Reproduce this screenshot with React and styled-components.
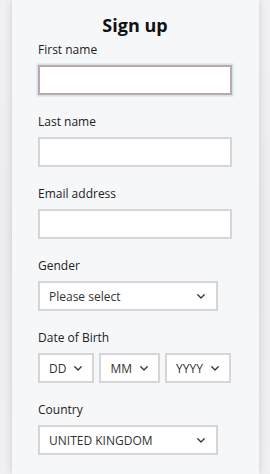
import React from "react";
import styled, { createGlobalStyle } from "styled-components";

const Global = createGlobalStyle`
  html, body { margin: 0; padding: 0; }
  body {
    background: #eeeef0;
    font-family: "Open Sans", "Liberation Sans", sans-serif;
    width: 270px;
    height: 474px;
    overflow: hidden;
  }
`;

const Page = styled.div`
  display: flex;
  height: 474px;
  padding-left: 12px;
  background: linear-gradient(180deg, #f1f1f3 0%, #ececef 50%, #f0f0f2 100%);
`;

const Panel = styled.div`
  width: 247px;
  box-sizing: border-box;
  background: #f6f7f9;
  padding: 13px 0 0 26px;
  display: flex;
  flex-direction: column;
  box-shadow: 0 0 8px rgba(0, 0, 0, 0.14);
`;

const Title = styled.h1`
  margin: 0 0 5px;
  font-size: 18px;
  line-height: 24px;
  font-weight: 700;
  color: #111;
  text-align: center;
  width: 194px;
`;

const Field = styled.div`
  display: flex;
  flex-direction: column;
  margin-bottom: 19px;
`;

const Label = styled.label`
  font-size: 12px;
  line-height: 16px;
  color: #222;
  margin-bottom: 7px;
`;

const Input = styled.div`
  box-sizing: border-box;
  width: 194px;
  height: 30px;
  background: #fff;
  border: 2px solid ${(p) => (p.$focus ? "#c4a6aa" : "#d6d6d8")};
  box-shadow: ${(p) => (p.$focus ? "0 0 0 1.5px #cfe5ef" : "none")};
`;

const Select = styled.div`
  box-sizing: border-box;
  width: ${(p) => (p.$auto ? "auto" : "180px")};
  height: 30px;
  background: #fff;
  border: 2px solid #d6d6d8;
  display: flex;
  align-items: center;
  justify-content: space-between;
  gap: 8px;
  padding: 0 ${(p) => (p.$auto ? "10px" : "11px")} 0 9px;
  font-size: 12px;
  color: #333;
`;

const DateRow = styled.div`
  display: flex;
  gap: 5px;
`;

const Chevron = () => (
  <svg width="8" height="5" viewBox="0 0 8 5" fill="none">
    <path d="M0.8 0.8 L4 4 L7.2 0.8" stroke="#333" strokeWidth="1.3" strokeLinecap="round" strokeLinejoin="round" />
  </svg>
);

export default function App() {
  return (
    <>
      <Global />
      <Page>
        <Panel>
          <Title>Sign up</Title>
          <Field>
            <Label>First name</Label>
            <Input $focus />
          </Field>
          <Field>
            <Label>Last name</Label>
            <Input />
          </Field>
          <Field>
            <Label>Email address</Label>
            <Input />
          </Field>
          <Field>
            <Label>Gender</Label>
            <Select>
              <span>Please select</span>
              <Chevron />
            </Select>
          </Field>
          <Field>
            <Label>Date of Birth</Label>
            <DateRow>
              <Select $auto><span>DD</span><Chevron /></Select>
              <Select $auto><span>MM</span><Chevron /></Select>
              <Select $auto><span>YYYY</span><Chevron /></Select>
            </DateRow>
          </Field>
          <Field>
            <Label>Country</Label>
            <Select>
              <span>UNITED KINGDOM</span>
              <Chevron />
            </Select>
          </Field>
        </Panel>
      </Page>
    </>
  );
}
